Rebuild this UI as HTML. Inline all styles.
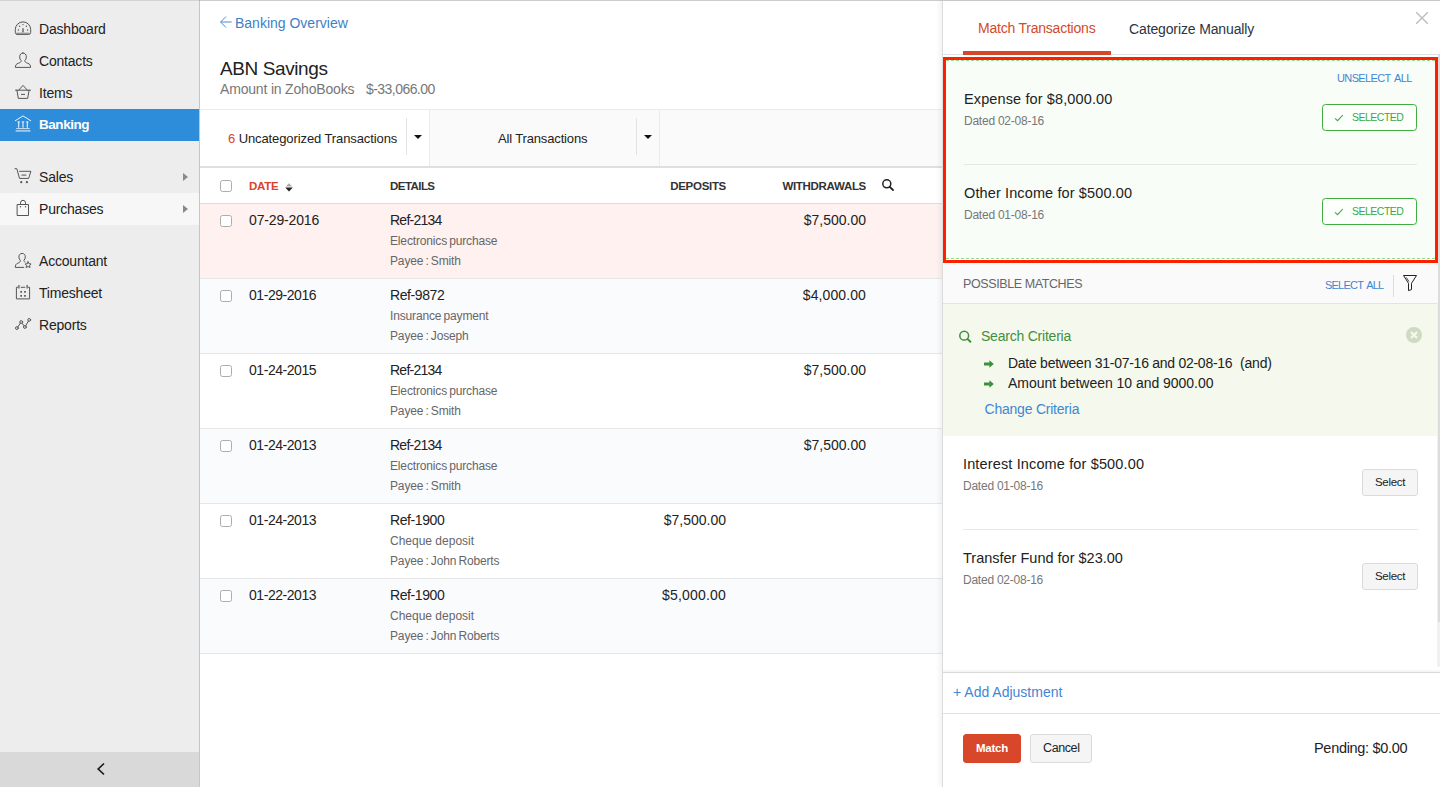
<!DOCTYPE html>
<html lang="en">
<head>
<meta charset="utf-8">
<title>ABN Savings - Banking</title>
<style>
*{box-sizing:border-box;margin:0;padding:0}
html,body{width:1440px;height:787px;overflow:hidden;background:#fff}
body{font-family:"Liberation Sans",sans-serif;color:#222;position:relative;font-size:13px}
.abs{position:absolute}
.t{position:absolute;white-space:nowrap;line-height:1}
/* sidebar */
#side{position:absolute;left:0;top:0;width:200px;height:787px;background:#ededed;border-right:1px solid #c6c6c6}
#side .it{position:absolute;left:0;width:199px;height:32px}
#side .it .lb{position:absolute;left:39px;top:9px;font-size:14px;line-height:1;color:#222;white-space:nowrap;letter-spacing:-0.2px}
#side .it.act{background:#2e8ddb}
#side .it.act .lb{color:#fff;font-weight:bold;font-size:13.5px;letter-spacing:-0.45px}
#side .it.hov{background:#f7f7f7}
#side .it svg{position:absolute;left:14px;top:6px}
#side .arr{position:absolute;left:183px;top:12px;width:0;height:0;border-left:5px solid #8a8a8a;border-top:4px solid transparent;border-bottom:4px solid transparent}
#coll{position:absolute;left:0;top:752px;width:199px;height:35px;background:#d9d9d9}
/* main */
#main{position:absolute;left:200px;top:0;width:742px;height:787px;background:#fff}
#main:before{content:"";position:absolute;left:0;top:0;width:742px;height:1px;background:#e4e4e4}
/* panel */
#panel{position:absolute;left:942px;top:0;width:498px;height:787px;background:#fff;border-left:1px solid #dcdcdc;box-shadow:-3px 0 4px rgba(0,0,0,.05)}

/* main header */
.blue{color:#3d7fc5}
.gray{color:#777}
#tabs{position:absolute;left:0;top:109px;width:742px;height:59px;background:#fafafa;border-top:1px solid #ebebeb;border-bottom:2px solid #dfdfdf}
#tabs .tb{position:absolute;top:0;height:56px;border-right:1px solid #ececec}
#tabs .dv{position:absolute;top:8px;width:1px;height:37px;background:#e3e3e3}
.caret{position:absolute;width:0;height:0;border-top:4.5px solid #111;border-left:4.5px solid transparent;border-right:4.5px solid transparent}
.cb{position:absolute;width:12px;height:12px;border:1px solid #adadad;border-radius:2.5px;background:#fff}
#thead{position:absolute;left:0;top:168px;width:742px;height:36px;border-bottom:1px solid #dedede;background:#fff}
.th{position:absolute;top:13px;font-size:11.5px;font-weight:bold;color:#333;line-height:1;white-space:nowrap;letter-spacing:-0.3px}
.row{position:absolute;left:0;width:742px;height:75px;border-bottom:1px solid #e7e7e7}
.row.alt{background:#fafbfd}
.row.sel{background:#fef1ef}
.row .d{position:absolute;left:49px;top:9px;letter-spacing:-0.15px;font-size:14px;line-height:1;white-space:nowrap}
.row .r{position:absolute;left:190px;top:9px;letter-spacing:-0.4px;font-size:14px;line-height:1;white-space:nowrap}
.row .s1{position:absolute;left:190px;top:31px;letter-spacing:-0.15px;word-spacing:-1px;font-size:12px;color:#666;line-height:1;white-space:nowrap}
.row .s2{position:absolute;left:190px;top:51px;letter-spacing:-0.15px;word-spacing:-1px;font-size:12px;color:#666;line-height:1;white-space:nowrap}
.row .dep{position:absolute;right:216px;top:9px;font-size:14px;line-height:1;white-space:nowrap}
.row .wd{position:absolute;right:76px;top:9px;font-size:14px;line-height:1;white-space:nowrap}

/* panel */
#panel .t{color:#222}
.selbtn{position:absolute;width:95px;height:27px;border:1px solid #41ad41;border-radius:3.5px;background:#fcfffc}
.btn{position:absolute;border:1px solid #dbdbdb;border-radius:3px;background:#f5f5f5}
#topline{position:absolute;left:0;top:0;width:1440px;height:1px;background:rgba(0,0,0,.1);z-index:9}
</style>
</head>
<body>
<div id="topline"></div>
<div id="side">
  <div class="it" style="top:13px"><svg width="18" height="18" viewBox="0 0 18 18"><path d="M3.2 15.4H14.8Q16.7 15.4 16.7 13.4V10.6A7.7 7.7 0 0 0 1.3 10.6V13.4Q1.3 15.4 3.2 15.4Z" fill="none" stroke="#555" stroke-width="1" stroke-linecap="round" stroke-linejoin="round"/><path d="M9 9.3V13.2" stroke="#555" stroke-width="1.3" fill="none"/><path d="M2.6 14.2H15.4" stroke="#555" stroke-width=".9" fill="none" opacity=".8"/><circle cx="4.4" cy="11" r=".7" fill="#555"/><circle cx="5.6" cy="7.3" r=".7" fill="#555"/><circle cx="9" cy="5.6" r=".7" fill="#555"/><circle cx="12.4" cy="7.3" r=".7" fill="#555"/><circle cx="13.6" cy="11" r=".7" fill="#555"/></svg><span class="lb">Dashboard</span></div>
  <div class="it" style="top:45px"><svg width="18" height="18" viewBox="0 0 18 18"><path d="M9 2C11 2 12.3 3.5 12.3 5.8C12.3 7.6 11.7 8.8 10.8 9.6C10.8 11.2 11.8 11.6 13.6 12.2C15.8 13 16.6 14 16.6 16.4H1.4C1.4 14 2.2 13 4.4 12.2C6.2 11.6 7.2 11.2 7.2 9.6C6.3 8.8 5.7 7.6 5.7 5.8C5.7 3.5 7 2 9 2Z" fill="none" stroke="#555" stroke-width="1" stroke-linecap="round" stroke-linejoin="round"/></svg><span class="lb">Contacts</span></div>
  <div class="it" style="top:77px"><svg width="18" height="18" viewBox="0 0 18 18"><path d="M1.5 7.2H16.5M2.9 7.2L4.3 15.4H13.7L15.1 7.2M4.6 7.2L9 2.4L13.4 7.2M7.4 11.4H10.6" fill="none" stroke="#555" stroke-width="1" stroke-linecap="round" stroke-linejoin="round"/></svg><span class="lb">Items</span></div>
  <div class="it act" style="top:109px"><svg width="18" height="18" viewBox="0 0 18 18"><g fill="none" stroke="#fff" stroke-linecap="round" stroke-linejoin="round"><path d="M1.3 5.7L9 0.9L16.7 5.7" stroke-width="1" opacity=".9"/><path d="M3.8 6.9H5.6M8.1 6.9H9.9M12.4 6.9H14.2" stroke-width=".9" opacity=".85"/><path d="M4.7 7V12.2M9 7V12.2M13.3 7V12.2" stroke-width="1.1" opacity=".9"/><path d="M2.6 13.6H15.4" stroke-width="1" opacity=".75"/><path d="M1.6 15.9H16.4" stroke-width="1.7" opacity=".55" stroke-linecap="butt"/></g></svg><span class="lb">Banking</span></div>
  <div class="it" style="top:161px"><svg width="18" height="18" viewBox="0 0 18 18"><path d="M1 1.7H2.8L5.5 11.4H14.7L16.9 4.3H5.6M7.8 8.1H12" fill="none" stroke="#555" stroke-width="1" stroke-linecap="round" stroke-linejoin="round"/><circle cx="7.2" cy="15.2" r="1.1" fill="#555"/><circle cx="12.9" cy="15.2" r="1.1" fill="#555"/></svg><span class="lb">Sales</span><i class="arr"></i></div>
  <div class="it hov" style="top:193px"><svg width="18" height="18" viewBox="0 0 18 18"><path d="M3.5 5.5H14.5V16.5H3.5ZM6.5 5.5V3.8A2.5 2.5 0 0 1 11.5 3.8V5.5" fill="none" stroke="#555" stroke-width="1" stroke-linecap="round" stroke-linejoin="round"/><circle cx="6.5" cy="7.7" r=".7" fill="#555"/><circle cx="11.5" cy="7.7" r=".7" fill="#555"/></svg><span class="lb">Purchases</span><i class="arr"></i></div>
  <div class="it" style="top:245px"><svg width="18" height="18" viewBox="0 0 18 18"><path d="M9.8 16.4H1.3C1.3 14 1.9 13 3.9 12.2C5.5 11.6 6.3 11.1 6.3 9.3C5.4 8.6 4.9 7.4 4.9 5.9C4.9 3.8 6.2 2.4 8.1 2.4C10 2.4 11.3 3.8 11.3 5.9C11.3 7.4 10.8 8.6 9.9 9.3C9.9 10.3 10.3 10.8 11 11.1" fill="none" stroke="#555" stroke-width="1" stroke-linecap="round" stroke-linejoin="round"/><path d="M14.1 10.8L15 12.7L17.1 13L15.6 14.4L16 16.5L14.1 15.5L12.2 16.5L12.6 14.4L11.1 13L13.2 12.7Z" fill="none" stroke="#555" stroke-width="1" stroke-linecap="round" stroke-linejoin="round"/></svg><span class="lb">Accountant</span></div>
  <div class="it" style="top:277px"><svg width="18" height="18" viewBox="0 0 18 18"><path d="M3.6 4.3H2.4V15.9H15.6V4.3H14.4M7.2 4.3H10.8" fill="none" stroke="#555" stroke-width="1" stroke-linecap="round" stroke-linejoin="round"/><path d="M4.9 2V5.6M13.1 2V5.6" fill="none" stroke="#555" stroke-width="1.2"/><g fill="#555"><rect x="6.3" y="8" width="1.7" height="1.7"/><rect x="10.1" y="8" width="1.7" height="1.7"/><rect x="6.3" y="12" width="1.7" height="1.7"/><rect x="10.1" y="12" width="1.7" height="1.7"/></g></svg><span class="lb">Timesheet</span></div>
  <div class="it" style="top:309px"><svg width="18" height="18" viewBox="0 0 18 18"><path d="M3.8 12L6.3 8.2M8 8.2L10.1 10.8M11.7 10.8L14.4 6.1" fill="none" stroke="#555" stroke-width="1" stroke-linecap="round" stroke-linejoin="round"/><circle cx="2.9" cy="13.1" r="1.4" fill="none" stroke="#555" stroke-width="1" stroke-linecap="round" stroke-linejoin="round"/><circle cx="7.2" cy="7" r="1.4" fill="none" stroke="#555" stroke-width="1" stroke-linecap="round" stroke-linejoin="round"/><circle cx="10.9" cy="12" r="1.4" fill="none" stroke="#555" stroke-width="1" stroke-linecap="round" stroke-linejoin="round"/><circle cx="15.2" cy="4.9" r="1.4" fill="none" stroke="#555" stroke-width="1" stroke-linecap="round" stroke-linejoin="round"/></svg><span class="lb">Reports</span></div>
  <div id="coll"><svg class="abs" style="left:95px;top:10px" width="12" height="14" viewBox="0 0 12 14"><path d="M9 1.5L3.2 7L9 12.5" fill="none" stroke="#1a1a1a" stroke-width="1.7"/></svg></div>
</div>
<div id="main">
  <svg class="abs" style="left:19px;top:15px" width="14" height="14" viewBox="0 0 14 14"><path d="M12.7 7H1.8M7 1.5L1.5 7L7 12.5" fill="none" stroke="#4a8bd0" stroke-width="1"/></svg>
  <span class="t blue" style="left:35px;top:16px;font-size:14px">Banking Overview</span>
  <span class="t" style="left:20px;top:59px;font-size:19px;color:#222;letter-spacing:-0.4px">ABN Savings</span>
  <span class="t gray" style="left:20px;top:82px;font-size:14px;letter-spacing:-0.18px">Amount in ZohoBooks</span>
  <span class="t gray" style="left:166px;top:82px;font-size:14px;letter-spacing:-0.55px">$-33,066.00</span>
  <div id="tabs">
    <div class="tb" style="left:0;width:230px;background:#fff"></div>
    <div class="tb" style="left:230px;width:230px"></div>
    <span class="t" style="left:28px;top:22px;font-size:13px;letter-spacing:-0.1px"><span style="color:#d9432b">6</span> Uncategorized Transactions</span>
    <i class="dv" style="left:206px"></i><i class="caret" style="left:214px;top:25px"></i>
    <span class="t" style="left:298px;top:22px;font-size:13px;letter-spacing:-0.15px">All Transactions</span>
    <i class="dv" style="left:436px"></i><i class="caret" style="left:444px;top:25px"></i>
  </div>
  <div id="thead">
    <i class="cb" style="left:20px;top:12px"></i>
    <span class="th" style="left:49px;color:#d9432b">DATE</span>
    <svg class="abs" style="left:85px;top:15px" width="8" height="9" viewBox="0 0 8 9"><path d="M4 0.3L7.2 3.6H0.8Z" fill="#aaa"/><path d="M0.2 4.4H7.8L4 8.4Z" fill="#222"/></svg>
    <span class="th" style="left:190px;letter-spacing:-0.55px">DETAILS</span>
    <span class="th" style="right:216px">DEPOSITS</span>
    <span class="th" style="right:76px">WITHDRAWALS</span>
    <svg class="abs" style="left:681px;top:10px" width="14" height="14" viewBox="0 0 14 14"><circle cx="5.8" cy="5.8" r="4" fill="none" stroke="#222" stroke-width="1.5"/><path d="M8.8 8.8L12 12" stroke="#222" stroke-width="1.8" stroke-linecap="round"/></svg>
  </div>
  <div class="row sel" style="top:204px"><i class="cb" style="left:20px;top:11px"></i><span class="d">07-29-2016</span><span class="r" style="letter-spacing:-0.75px">Ref-2134</span><span class="s1">Electronics purchase</span><span class="s2">Payee : Smith</span><span class="wd">$7,500.00</span></div>
  <div class="row alt" style="top:279px"><i class="cb" style="left:20px;top:11px"></i><span class="d" style="letter-spacing:-0.45px">01-29-2016</span><span class="r">Ref-9872</span><span class="s1">Insurance payment</span><span class="s2">Payee : Joseph</span><span class="wd" style="letter-spacing:0.1px">$4,000.00</span></div>
  <div class="row " style="top:354px"><i class="cb" style="left:20px;top:11px"></i><span class="d" style="letter-spacing:-0.45px">01-24-2015</span><span class="r" style="letter-spacing:-0.75px">Ref-2134</span><span class="s1">Electronics purchase</span><span class="s2">Payee : Smith</span><span class="wd">$7,500.00</span></div>
  <div class="row alt" style="top:429px"><i class="cb" style="left:20px;top:11px"></i><span class="d" style="letter-spacing:-0.45px">01-24-2013</span><span class="r" style="letter-spacing:-0.75px">Ref-2134</span><span class="s1">Electronics purchase</span><span class="s2">Payee : Smith</span><span class="wd">$7,500.00</span></div>
  <div class="row " style="top:504px"><i class="cb" style="left:20px;top:11px"></i><span class="d" style="letter-spacing:-0.45px">01-24-2013</span><span class="r">Ref-1900</span><span class="s1" style="letter-spacing:0;word-spacing:0">Cheque deposit</span><span class="s2">Payee : John Roberts</span><span class="dep">$7,500.00</span></div>
  <div class="row alt" style="top:579px"><i class="cb" style="left:20px;top:11px"></i><span class="d" style="letter-spacing:-0.45px">01-22-2013</span><span class="r">Ref-1900</span><span class="s1" style="letter-spacing:0;word-spacing:0">Cheque deposit</span><span class="s2">Payee : John Roberts</span><span class="dep" style="letter-spacing:0.2px">$5,000.00</span></div>
</div>
<div id="panel">
  <i class="abs" style="left:0px;top:0px;width:497px;height:1px;background:#e0e0e0"></i>
  <i class="abs" style="left:0px;top:54px;width:497px;height:1px;background:#e0e0e0"></i>
  <span class="t" style="left:35px;top:21px;font-size:14px;color:#d24a2b;letter-spacing:-0.22px">Match Transactions</span>
  <i class="abs" style="left:20px;top:51px;width:148px;height:4px;background:#d4492a"></i>
  <span class="t" style="left:186px;top:22px;font-size:14px;color:#2b3543;letter-spacing:-0.13px">Categorize Manually</span>
  <svg class="abs" style="left:472px;top:11px" width="14" height="14" viewBox="0 0 14 14"><path d="M1.2 1.2L12.8 12.8M12.8 1.2L1.2 12.8" stroke="#bdbdbd" stroke-width="1.4" fill="none"/></svg>
  <i class="abs" style="left:3px;top:60px;width:489px;height:200px;background:#f8fdf8"></i>
  <i class="abs" style="left:3px;top:60px;width:489px;height:199px;border-top:1px dashed #8fdc8f;border-bottom:1px dashed #8fdc8f"></i>
  <span class="t" style="left:394px;top:73px;font-size:11px;color:#3f86d4;letter-spacing:-0.62px;word-spacing:1.6px">UNSELECT ALL</span>
  <span class="t" style="left:21px;top:92px;font-size:14.5px;color:#222;letter-spacing:0.12px">Expense for $8,000.00</span>
  <span class="t" style="left:21px;top:115px;font-size:12px;color:#777;letter-spacing:-0.24px">Dated 02-08-16</span>
  <div class="selbtn" style="left:379px;top:104px"><svg class="abs" style="left:11px;top:9px" width="11" height="9" viewBox="0 0 11 9"><path d="M1 4.3L3.6 6.7L8.8 1" fill="none" stroke="#3aa845" stroke-width="1.1"/></svg><span class="t" style="left:29px;top:7px;font-size:10.5px;letter-spacing:-0.5px;color:#3aa845">SELECTED</span></div>
  <i class="abs" style="left:21px;top:164px;width:453px;height:1px;background:#e4e9e4"></i>
  <span class="t" style="left:21px;top:186px;font-size:14.5px;color:#222;letter-spacing:0.12px">Other Income for $500.00</span>
  <span class="t" style="left:21px;top:209px;font-size:12px;color:#777;letter-spacing:-0.24px">Dated 01-08-16</span>
  <div class="selbtn" style="left:379px;top:198px"><svg class="abs" style="left:11px;top:9px" width="11" height="9" viewBox="0 0 11 9"><path d="M1 4.3L3.6 6.7L8.8 1" fill="none" stroke="#3aa845" stroke-width="1.1"/></svg><span class="t" style="left:29px;top:7px;font-size:10.5px;letter-spacing:-0.5px;color:#3aa845">SELECTED</span></div>
  <i class="abs" style="left:0px;top:57px;width:495px;height:206px;border:3px solid #ff1f00"></i>
  <i class="abs" style="left:0px;top:263px;width:495px;height:40px;background:#fafafa"></i>
  <span class="t" style="left:20px;top:278px;font-size:12.5px;color:#666;letter-spacing:-0.4px">POSSIBLE MATCHES</span>
  <span class="t" style="left:382px;top:280px;font-size:11px;color:#3f86d4;letter-spacing:-0.78px;word-spacing:1.6px">SELECT ALL</span>
  <i class="abs" style="left:450px;top:275px;width:1px;height:22px;background:#dcdcdc"></i>
  <svg class="abs" style="left:459px;top:274px" width="16" height="18" viewBox="0 0 16 18"><path d="M1.5 1.5H14.5L9.5 9.3V15.6L6.5 16.6V9.3Z" fill="none" stroke="#222" stroke-width="1" stroke-linejoin="round"/><path d="M4.3 3.4L7 7.6" stroke="#222" stroke-width=".8" fill="none"/></svg>
  <i class="abs" style="left:0px;top:303px;width:494px;height:133px;background:#f5f8ed;border-top:1px solid #dfe9cf"></i>
  <svg class="abs" style="left:15px;top:330px" width="14" height="14" viewBox="0 0 14 14"><circle cx="6.2" cy="5.7" r="4.4" fill="none" stroke="#3e903e" stroke-width="1.5"/><path d="M9.6 9.1L12.4 11.8" stroke="#3e903e" stroke-width="2" stroke-linecap="round"/></svg>
  <span class="t" style="left:38px;top:329px;font-size:14px;color:#3e903e;letter-spacing:-0.22px">Search Criteria</span>
  <svg class="abs" style="left:463px;top:327px" width="16" height="16" viewBox="0 0 16 16"><circle cx="8" cy="8" r="8" fill="#cedac2"/><path d="M5 5L11 11M11 5L5 11" stroke="#f5f8ed" stroke-width="2.3"/></svg>
  <svg class="abs" style="left:41px;top:360px" width="10" height="8" viewBox="0 0 10 8"><path d="M0 2.6H5.4V0.3L9.8 4L5.4 7.7V5.4H0Z" fill="#3d8f3d"/></svg>
  <span class="t" style="left:65px;top:356px;font-size:14px;color:#222;letter-spacing:-0.27px">Date between 31-07-16 and 02-08-16</span>
  <span class="t" style="left:297px;top:356px;font-size:14px;color:#222;letter-spacing:-0.2px">(and)</span>
  <svg class="abs" style="left:41px;top:380px" width="10" height="8" viewBox="0 0 10 8"><path d="M0 2.6H5.4V0.3L9.8 4L5.4 7.7V5.4H0Z" fill="#3d8f3d"/></svg>
  <span class="t" style="left:65px;top:376px;font-size:14px;color:#222;letter-spacing:-0.03px">Amount between 10 and 9000.00</span>
  <span class="t" style="left:41.5px;top:402px;font-size:14px;color:#3f86d4;letter-spacing:-0.22px">Change Criteria</span>
  <span class="t" style="left:20px;top:457px;font-size:14.5px;color:#222;letter-spacing:0.14px">Interest Income for $500.00</span>
  <span class="t" style="left:20px;top:480px;font-size:12px;color:#777;letter-spacing:-0.24px">Dated 01-08-16</span>
  <div class="btn" style="left:419px;top:469px;width:56px;height:27px"><span class="t" style="left:12px;top:7px;font-size:11.5px;letter-spacing:-0.3px;color:#222">Select</span></div>
  <i class="abs" style="left:20px;top:529px;width:455px;height:1px;background:#e8e8e8"></i>
  <span class="t" style="left:20px;top:551px;font-size:14.5px;color:#222">Transfer Fund for $23.00</span>
  <span class="t" style="left:20px;top:574px;font-size:12px;color:#777;letter-spacing:-0.24px">Dated 02-08-16</span>
  <div class="btn" style="left:419px;top:563px;width:56px;height:27px"><span class="t" style="left:12px;top:7px;font-size:11.5px;letter-spacing:-0.3px;color:#222">Select</span></div>
  <i class="abs" style="left:494px;top:303px;width:1px;height:364px;background:#f1f1f1"></i>
  <i class="abs" style="left:495px;top:55px;width:2px;height:612px;background:#f1f1f1"></i>
  <i class="abs" style="left:495px;top:55px;width:2px;height:567px;background:#dcdcdc"></i>
  <i class="abs" style="left:0px;top:669px;width:497px;height:3px;background:linear-gradient(rgba(0,0,0,0),rgba(0,0,0,.05))"></i>
  <i class="abs" style="left:0px;top:672px;width:497px;height:1px;background:#d9d9d9"></i>
  <span class="t" style="left:10px;top:685px;font-size:14px;color:#3f86d4">+ Add Adjustment</span>
  <i class="abs" style="left:0px;top:713px;width:497px;height:1px;background:#e0e0e0"></i>
  <div class="btn" style="left:20px;top:734px;width:58px;height:29px;background:#d9472b;border-color:#d9472b"><span class="t" style="left:12px;top:8px;font-size:11.5px;font-weight:bold;letter-spacing:-0.25px;color:#fff">Match</span></div>
  <div class="btn" style="left:87px;top:734px;width:62px;height:29px"><span class="t" style="left:12px;top:7px;font-size:12.5px;letter-spacing:-0.4px;color:#222">Cancel</span></div>
  <span class="t" style="left:371px;top:741px;font-size:14.5px;color:#222;letter-spacing:-0.3px">Pending: $0.00</span>
</div>
</body>
</html>
